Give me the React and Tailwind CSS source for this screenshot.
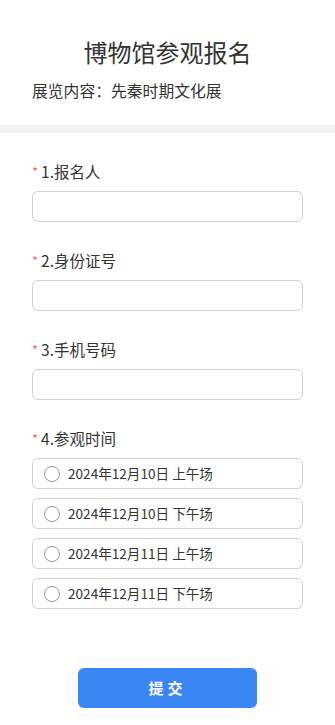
import React, { useState } from 'react';

const font = { fontFamily: '"Noto Sans CJK SC", "Noto Sans", sans-serif' };

const fields = ['1.报名人', '2.身份证号', '3.手机号码'];
const sessions = [
  '2024年12月10日 上午场',
  '2024年12月10日 下午场',
  '2024年12月11日 上午场',
  '2024年12月11日 下午场',
];

function Label({ text }) {
  return (
    <div className="flex items-center h-[21px] text-[15.5px] text-[#333] leading-[21px]">
      <span className="text-[#f56c6c] text-[13px] mr-[3px] leading-none">*</span>
      <span>{text}</span>
    </div>
  );
}

export default function App() {
  const [picked, setPicked] = useState(null);

  return (
    <div className="w-[335px] min-h-[725px] bg-white" style={font}>
      {/* Header */}
      <div className="pt-[36px] pb-[24px] px-[32px]">
        <h1 className="text-center text-[24px] leading-[32px] text-[#333] font-normal">博物馆参观报名</h1>
        <p className="mt-[13px] text-[15.8px] leading-[20px] text-[#333]">展览内容：先秦时期文化展</p>
      </div>

      <div className="h-[8px] bg-[#f2f2f2]" />

      {/* Form */}
      <div className="px-[32px] pt-[28px]">
        {fields.map((f) => (
          <div key={f} className="mb-[28px]">
            <Label text={f} />
            <input className="mt-[9px] block w-[271px] h-[31px] rounded-[6px] border border-[#d0d0d0] px-2 text-[13px] outline-none" />
          </div>
        ))}

        <Label text="4.参观时间" />
        <div className="mt-[9px] flex flex-col gap-[9px]">
          {sessions.map((s, i) => (
            <button
              key={s}
              onClick={() => setPicked(i)}
              className="flex items-center w-[271px] h-[31px] rounded-[6px] border border-[#d0d0d0] pl-[11px] text-left"
            >
              <span className="w-[16px] h-[16px] rounded-full border border-[#999] flex items-center justify-center">
                {picked === i && <span className="w-[8px] h-[8px] rounded-full bg-[#3a86f5]" />}
              </span>
              <span className="ml-[8px] text-[13.6px] text-[#333]">{s}</span>
            </button>
          ))}
        </div>

        <div className="flex justify-center pt-[59px] pb-[16px]">
          <button className="w-[179px] h-[40px] rounded-[6px] bg-[#3a86f5] text-white text-[15px] font-bold tracking-[4px]">
            提交
          </button>
        </div>
      </div>
    </div>
  );
}
